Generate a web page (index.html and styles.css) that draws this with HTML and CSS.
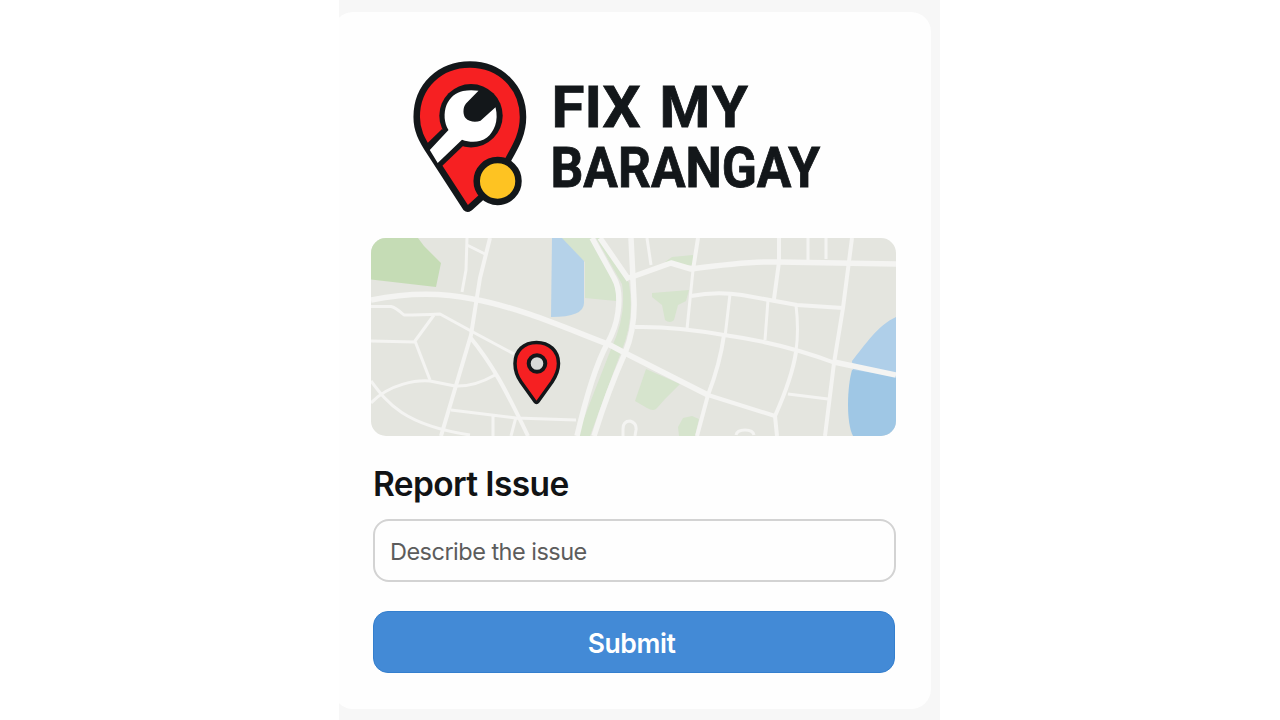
FILE: index.html
```html
<!DOCTYPE html>
<html lang="en">
<head>
<meta charset="utf-8">
<title>Fix My Barangay</title>
<link rel="stylesheet" href="styles.css">
</head>
<body>
<main class="stage">
  <section class="card">
    <header class="brand">
      <svg class="brand-mark" viewBox="412 60 116 154" aria-hidden="true">
        <path class="mark-pin" d="M466 208 L431 154 C421 139 416.700 130 416.700 117 C416.700 86 440 64.500 470 64.500 C500 64.500 523 87 523 117 C523 133 517 144 508.500 159 L496 184 L469.500 208 Q467.500 209.500 466 208Z"/>
        <circle class="mark-ink" cx="471" cy="115.700" r="31.700"/>
        <path class="mark-ink" d="M424.500 146 L442 129 L463 146 L440 168Z"/>
        <path class="mark-wrench" d="M429.800 150 L448.500 130 C444 123 443.500 113 446.500 105 C450 97 456 92.500 463 91 C468 90 473 90 478.500 90.700 L466 103.500 C462.500 107.500 463 115 465.500 118 C469 122 476 122.500 480.500 120.700 L495.500 107.300 C499 121 494 132 487 137.500 C480 142.500 471 143 462 139.700 L437.700 163Z"/>
        <circle class="mark-coin" cx="497.600" cy="181" r="20.900"/>
      </svg>
      <svg class="brand-name" viewBox="545 70 290 140" role="img" aria-label="Fix My Barangay">
        <text x="551.500" y="127.300" font-size="58" textLength="89" lengthAdjust="spacingAndGlyphs">FIX</text>
        <text x="659.500 712" y="127.300" font-size="58">MY</text>
        <text x="550.500" y="186.500" font-size="55.500" textLength="269.500" lengthAdjust="spacingAndGlyphs">BARANGAY</text>
      </svg>
    </header>
    <svg class="map" viewBox="371 238 525 198" role="img" aria-label="Map">
      <rect class="land" x="371" y="238" width="525" height="198"/>
      <path class="park-strong" d="M371 238H418L424 246L441 263L436 287L371 279.500Z"/>
      <g class="park">
        <path d="M560 238H592L616 281V301L585 298V262Z"/>
        <path d="M596 238H603L629 283Q635 320 621 352L590 436H577L611 349Q627 315 622 284Z"/>
        <path d="M652 293L689 290L686 301L678 305L674 320Q670 324 665 320L662 305L652 297Z"/>
        <path d="M646 369L680 384L665 399L657 408Q654 412 647 408L635 401Z"/>
        <path d="M679 436L678 427L683 418L692 416L699 419L695 436Z"/>
        <path d="M665 262L672 257L693 255V265L675 266Z"/>
      </g>
      <path class="pond" d="M552 238H562L584 261V303Q584 317 551 317Z"/>
      <path class="lake-light" d="M896 317C878 325 865 345 852 361L853 372L896 380Z"/>
      <path class="lake" d="M852 370C847 387 846 423 853 436H896V376Z"/>
      <g class="road thin">
        <path d="M371 306.500H391Q395 307 404 315Q420 315 440 314L471 331L514 354"/>
        <path d="M434 315L415 341L430 380M371 341L415 342"/>
        <path d="M371 403C390 383 418 380 430 381L455 386Q474 387 495 375"/>
        <path d="M371 381C387 403 404 425 470 435"/>
        <path d="M467 238L466 270L462 292M467 245L485 254"/>
        <path d="M451 410L516 418L576 420M493 416V436M516 417L511 436"/>
        <path d="M647 238L651 265"/>
        <path d="M623 436V429Q623 421 630 421Q637 423 636 430L635 436M736 435Q737 430 745 430Q753 430 754 435"/>
        <path d="M808 238V260M826 238V259"/>
        <path d="M730 294L725 337M768 300L765 340M796 305Q799 330 796 351"/>
        <path d="M788 394L828 399"/>
        <path d="M693 270L687 329"/>
      </g>
      <g class="road mid">
        <path d="M490 238L480 278L471 335L441 436"/>
        <path d="M470 337C492 364 504 386 528 436"/>
        <path d="M779 238V262L774 299M698 238L693 270"/>
        <path d="M691 296Q716 291 742 295L797 305L843 308"/>
        <path d="M635 327Q673 326 724 335Q782 343 835 363"/>
        <path d="M724 335Q720 364 708 395L697 436"/>
        <path d="M796 352Q792 378 775 416L777 436"/>
        <path d="M708 395L775 416M852 238L843 308L834 363L825 436"/>
      </g>
      <g class="road wide">
        <path d="M371 300Q425 289 473 299C522 308 570 330 610 345L625 353L708 395"/>
        <path d="M592 238L614 278Q621 290 618 312Q616 328 607 344Q592 372 577 436"/>
        <path d="M600 238L629 280M631 238L634 300Q635 329 625 353Q608 391 594 436"/>
        <path d="M629 278L671 263L691 269Q750 261 779 262L896 264"/>
        <path d="M834 362L896 375"/>
      </g>
      <path class="pin" d="M538 401.500Q536.500 403.500 535 401.500L521 382C517.500 377 515 370 515 363.500C515 350.500 524 342.500 536.500 342.500C549 342.500 558.500 350.500 558.500 363.500C558.500 370 556 376 552 382Z"/>
      <circle class="pin-eye" cx="537" cy="363.500" r="8.300"/>
    </svg>
    <form class="report">
      <h1 class="report-title">Report Issue</h1>
      <input class="report-input" type="text" placeholder="Describe the issue" aria-label="Describe the issue">
      <button class="report-submit" type="button">Submit</button>
    </form>
  </section>
</main>
</body>
</html>
```

FILE: styles.css
```css
* { box-sizing: border-box; }
body { margin: 0; background: #fff; font-family: Inter, "Liberation Sans", sans-serif; }
.stage { width: 601px; height: 720px; margin: 0 auto 0 339px; padding-top: 12px; background: #f7f7f7; overflow: hidden; }
.card { width: 598px; height: 697px; margin-left: -6px; padding: 48px 35px 0 38px; border-radius: 20px; background: #fefefe; }
.brand { display: flex; height: 178px; padding-left: 41px; }
.brand-mark { width: 116px; height: 154px; margin-right: 17px; flex: none; }
.brand-name { width: 290px; height: 140px; margin-top: 10px; flex: none; overflow: visible; font-family: Roboto, sans-serif; font-weight: 700; fill: #13171a; stroke: #13171a; stroke-width: 0.800; }
.mark-pin { fill: #f62022; stroke: #13171a; stroke-width: 6.500; stroke-linejoin: round; }
.mark-ink { fill: #13171a; }
.mark-wrench { fill: #fff; }
.mark-coin { fill: #fec322; stroke: #13171a; stroke-width: 6.500; }
.map { display: block; width: 525px; height: 198px; border-radius: 15px; }
.land { fill: #e4e5df; }
.park { fill: #d6e4cd; }
.park-strong { fill: #c5dcb5; }
.pond { fill: #b5d2e9; }
.lake-light { fill: #afcfe9; }
.lake { fill: #9fc7e5; }
.road { fill: none; stroke: #f4f4f2; stroke-linejoin: round; }
.thin { stroke-width: 3; }
.mid { stroke-width: 4; }
.wide { stroke-width: 5.500; }
.pin { fill: #f62022; stroke: #13171a; stroke-width: 3.500; stroke-linejoin: round; }
.pin-eye { fill: #d9dad8; stroke: #13171a; stroke-width: 4; }
.report { display: flex; flex-direction: column; padding: 28px 0 0 2px; }
.report-title { margin: 0; height: 55px; line-height: 40px; font-size: 33.500px; font-weight: 600; letter-spacing: -0.620px; color: #111315; white-space: nowrap; }
.report-input { height: 63px; padding: 1px 15px 0; border: 2px solid #d3d3d3; border-radius: 16px; background: #fefefe; font: 400 23.500px Inter, sans-serif; letter-spacing: -0.520px; }
.report-input::placeholder { color: #5c5c5c; opacity: 1; }
.report-submit { width: 522px; height: 62px; margin-top: 29px; padding: 2px 5px 0 0; border: 1px solid #347fce; border-radius: 15px; background: #438ad6; color: #fff; font: 600 26.500px Inter, sans-serif; letter-spacing: -0.400px; }
```
